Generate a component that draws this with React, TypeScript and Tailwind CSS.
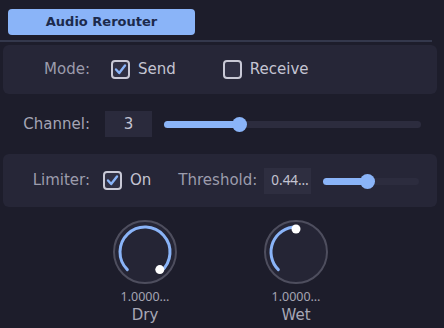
import React from 'react';

const font = { fontFamily: '"DejaVu Sans", "Noto Sans", sans-serif' };

function Check({ checked }: { checked: boolean }) {
  return (
    <span className="flex h-[19px] w-[19px] items-center justify-center rounded-[4px] border-2 border-[#c9c9d6] bg-[#303044]">
      {checked && (
        <svg width="13" height="13" viewBox="0 0 13 13">
          <path d="M2 6.5 L5.2 10 L11 2.5" fill="none" stroke="#8ab4f8" strokeWidth="2.4" strokeLinecap="round" strokeLinejoin="round" />
        </svg>
      )}
    </span>
  );
}

function Slider({ width, value }: { width: number; value: number }) {
  return (
    <div className="relative h-[14px]" style={{ width }}>
      <div className="absolute left-0 right-0 top-[4px] h-[7px] rounded-full bg-[#2c2c3e]" />
      <div className="absolute left-0 top-[4px] h-[7px] rounded-full bg-[#8ab4f8]" style={{ width: value * width }} />
      <div className="absolute top-0 h-[15px] w-[15px] rounded-full bg-[#8ab4f8]" style={{ left: value * width - 7 }} />
    </div>
  );
}

function Knob({ end, label }: { end: number; label: string }) {
  const c = 33;
  const pt = (deg: number, r: number) => {
    const a = (deg * Math.PI) / 180;
    return [c + r * Math.sin(a), c - r * Math.cos(a)];
  };
  const [sx, sy] = pt(-135, 25);
  const [ex, ey] = pt(end, 25);
  const [dx, dy] = pt(end, 23);
  const large = end + 135 > 180 ? 1 : 0;
  return (
    <div className="flex w-[80px] flex-col items-center">
      <svg width="66" height="66" viewBox="0 0 66 66">
        <circle cx={c} cy={c} r="31" fill="#252535" stroke="#4e4e5e" strokeWidth="2" />
        <path d={`M${sx} ${sy} A25 25 0 ${large} 1 ${ex} ${ey}`} fill="none" stroke="#8ab4f8" strokeWidth="3" strokeLinecap="round" />
        <circle cx={dx} cy={dy} r="4.5" fill="#ffffff" />
      </svg>
      <div className="mt-[5px] text-[12.5px] leading-[14px] text-[#a4a4b2]" style={{ fontFamily: '"Noto Sans", sans-serif' }}>1.0000…</div>
      <div className="mt-[2px] text-[15px] leading-[18px] text-[#a8a8b6]">{label}</div>
    </div>
  );
}

export default function App() {
  return (
    <div className="flex h-[328px] w-[444px] flex-col overflow-hidden bg-[#1d1d2b] pt-[9px]" style={font}>
      <div className="pl-[8px]">
        <div className="flex h-[26px] w-[187px] items-center justify-center rounded-[4px] bg-[#8ab4f8] text-[13px] font-bold text-[#1c2a4c]">
          Audio Rerouter
        </div>
      </div>
      <div className="mt-[5px] h-[2px] w-[432px] bg-[#34384c]" />

      <div className="ml-[3px] mt-[3px] flex h-[49px] w-[434px] items-center rounded-[6px] bg-[#262637] text-[15px]">
        <span className="w-[87px] text-right text-[#9c9cac]">Mode:</span>
        <span className="ml-[21px]"><Check checked /></span>
        <span className="ml-[8px] text-[#c4c4d2]">Send</span>
        <span className="ml-[47px]"><Check checked={false} /></span>
        <span className="ml-[8px] text-[#c4c4d2]">Receive</span>
      </div>

      <div className="flex h-[60px] items-center text-[15px]">
        <span className="w-[90px] text-right text-[#a4a4b4]">Channel:</span>
        <div className="ml-[15px] flex h-[26px] w-[47px] items-center justify-center bg-[#2a2a3c] text-[#c4c4d2]">3</div>
        <div className="ml-[12px]"><Slider width={257} value={0.29} /></div>
      </div>

      <div className="ml-[3px] flex h-[53px] w-[434px] items-center rounded-[6px] bg-[#262637] text-[15px]">
        <span className="w-[87px] text-right text-[#9c9cac]">Limiter:</span>
        <span className="ml-[13px]"><Check checked /></span>
        <span className="ml-[8px] text-[#c4c4d2]">On</span>
        <span className="ml-[27px] text-[#9c9cac]">Threshold:</span>
        <div className="ml-[7px] flex h-[26px] w-[47px] items-center bg-[#2e2e40] pl-[7px] text-[13.5px] text-[#c4c4d2]" style={{ fontFamily: '"Noto Sans", sans-serif' }}>0.44…</div>
        <div className="ml-[12px]"><Slider width={96} value={0.46} /></div>
      </div>

      <div className="mt-[12px] flex gap-[71px] pl-[105px]">
        <Knob end={140} label="Dry" />
        <Knob end={0} label="Wet" />
      </div>
    </div>
  );
}
